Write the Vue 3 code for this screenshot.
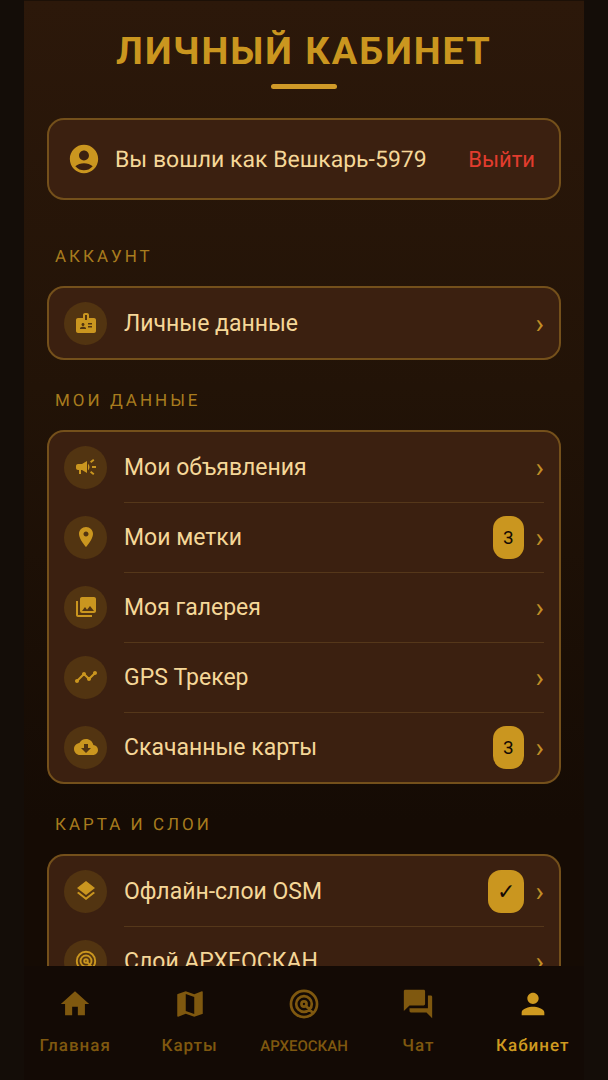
<template>
  <div class="app-shell">
    <main class="content">
      <header class="page-header">
        <h1>Личный кабинет</h1>
        <span class="title-line"></span>
      </header>

      <div class="card user-card">
        <svg class="user-icon" viewBox="0 0 24 24" aria-hidden="true">
          <path :d="icons.account" />
        </svg>
        <p class="user-text">Вы вошли как {{ userName }}</p>
        <button type="button" class="btn-logout">Выйти</button>
      </div>

      <section
        v-for="section in sections"
        :key="section.title"
        class="section"
      >
        <h2>{{ section.title }}</h2>
        <ul class="card menu-list">
          <li v-for="item in section.items" :key="item.label">
            <button type="button" class="menu-row">
              <span class="row-icon">
                <svg viewBox="0 0 24 24" aria-hidden="true">
                  <path
                    :d="icons[item.icon]"
                    :class="{ stroked: item.icon === 'scan' }"
                  />
                </svg>
              </span>
              <span class="row-label">{{ item.label }}</span>
              <span
                v-if="item.badge"
                class="badge"
                :class="{ 'badge--check': item.badge === '✓' }"
              >
                {{ item.badge }}
              </span>
              <span class="chevron">›</span>
            </button>
          </li>
        </ul>
      </section>
    </main>

    <nav class="bottom-nav">
      <a
        v-for="tab in tabs"
        :key="tab.label"
        href="#"
        class="tab"
        :class="{ 'tab--active': tab.label === activeTab }"
        @click.prevent="activeTab = tab.label"
      >
        <svg viewBox="0 0 24 24" aria-hidden="true">
          <path
            :d="icons[tab.icon]"
            :class="{ stroked: tab.icon === 'scan' }"
          />
        </svg>
        <span class="tab-label" :class="{ 'tab-label--small': tab.small }">
          {{ tab.label }}
        </span>
      </a>
    </nav>
  </div>
</template>

<script setup>
import { ref } from "vue";

const userName = "Вешкарь-5979";
const activeTab = ref("Кабинет");

const sections = [
  {
    title: "Аккаунт",
    items: [{ label: "Личные данные", icon: "badge" }],
  },
  {
    title: "Мои данные",
    items: [
      { label: "Мои объявления", icon: "campaign" },
      { label: "Мои метки", icon: "place", badge: "3" },
      { label: "Моя галерея", icon: "gallery" },
      { label: "GPS Трекер", icon: "timeline" },
      { label: "Скачанные карты", icon: "download", badge: "3" },
    ],
  },
  {
    title: "Карта и слои",
    items: [
      { label: "Офлайн-слои OSM", icon: "layers", badge: "✓" },
      { label: "Слой АРХЕОСКАН", icon: "scan" },
    ],
  },
];

const tabs = [
  { label: "Главная", icon: "home" },
  { label: "Карты", icon: "map" },
  { label: "АРХЕОСКАН", icon: "scan", small: true },
  { label: "Чат", icon: "forum" },
  { label: "Кабинет", icon: "person" },
];

const icons = {
  account:
    "M12 2C6.48 2 2 6.48 2 12s4.48 10 10 10 10-4.48 10-10S17.52 2 12 2zm0 4c1.93 0 3.5 1.57 3.5 3.5S13.93 13 12 13s-3.5-1.57-3.5-3.5S10.07 6 12 6zm0 14c-2.03 0-4.43-.82-6.14-2.88C7.55 15.8 9.68 15 12 15s4.45.8 6.14 2.12C16.43 19.18 14.03 20 12 20z",
  badge:
    "M20 7h-5V4c0-1.1-.9-2-2-2h-2c-1.1 0-2 .9-2 2v3H4c-1.1 0-2 .9-2 2v11c0 1.1.9 2 2 2h16c1.1 0 2-.9 2-2V9c0-1.1-.9-2-2-2zM9 12c.83 0 1.5.67 1.5 1.5S9.83 15 9 15s-1.5-.67-1.5-1.5S8.17 12 9 12zm3 6H6v-.75c0-1 2-1.5 3-1.5s3 .5 3 1.5V18zm1-9h-2V4h2v5zm5 7.5h-4V15h4v1.5zm0-3h-4V12h4v1.5z",
  campaign:
    "M18 11v2h4v-2h-4zM16 17.61c.96.71 2.21 1.65 3.2 2.39.4-.53.8-1.07 1.2-1.6-.99-.74-2.24-1.68-3.2-2.4-.4.54-.8 1.08-1.2 1.61zM20.4 5.6c-.4-.53-.8-1.07-1.2-1.6-.99.74-2.24 1.68-3.2 2.4.4.53.8 1.07 1.2 1.6.96-.72 2.21-1.65 3.2-2.4zM4 9c-1.1 0-2 .9-2 2v2c0 1.1.9 2 2 2h1v4h2v-4h1l5 3V6L8 9H4zM15.5 12c0-1.33-.58-2.53-1.5-3.35v6.69c.92-.81 1.5-2.01 1.5-3.34z",
  place:
    "M12 2C8.13 2 5 5.13 5 9c0 5.25 7 13 7 13s7-7.75 7-13c0-3.87-3.13-7-7-7zm0 9.5c-1.38 0-2.5-1.12-2.5-2.5s1.12-2.5 2.5-2.5 2.5 1.12 2.5 2.5-1.12 2.5-2.5 2.5z",
  gallery:
    "M22 16V4c0-1.1-.9-2-2-2H8c-1.1 0-2 .9-2 2v12c0 1.1.9 2 2 2h12c1.1 0 2-.9 2-2zm-11-4l2.03 2.71L16 11l4 5H8l3-4zM2 6v14c0 1.1.9 2 2 2h14v-2H4V6H2z",
  timeline:
    "M23 8c0 1.1-.9 2-2 2-.18 0-.35-.02-.51-.07l-3.56 3.55c.05.16.07.34.07.52 0 1.1-.9 2-2 2s-2-.9-2-2c0-.18.02-.36.07-.52l-2.55-2.55c-.16.05-.34.07-.52.07s-.36-.02-.52-.07l-4.55 4.56c.05.16.07.33.07.51 0 1.1-.9 2-2 2s-2-.9-2-2 .9-2 2-2c.18 0 .35.02.51.07l4.56-4.55C8.02 9.36 8 9.18 8 9c0-1.1.9-2 2-2s2 .9 2 2c0 .18-.02.36-.07.52l2.55 2.55c.16-.05.34-.07.52-.07s.36.02.52.07l3.55-3.56C19.02 8.35 19 8.18 19 8c0-1.1.9-2 2-2s2 .9 2 2z",
  download:
    "M19.35 10.04C18.67 6.59 15.64 4 12 4 9.11 4 6.6 5.64 5.35 8.04 2.34 8.36 0 10.91 0 14c0 3.31 2.69 6 6 6h13c2.76 0 5-2.24 5-5 0-2.64-2.05-4.78-4.65-4.96zM17 13l-5 5-5-5h3V9h4v4h3z",
  layers:
    "M11.99 18.54l-7.37-5.73L3 14.07l9 7 9-7-1.63-1.27-7.38 5.74zM12 16l7.36-5.73L21 9l-9-7-9 7 1.63 1.27L12 16z",
  // кольца радара и луч
  scan: "M21.2 12A9.2 9.2 0 1 1 2.8 12A9.2 9.2 0 1 1 21.2 12zM17.5 12A5.5 5.5 0 1 1 6.5 12A5.5 5.5 0 1 1 17.5 12zM13.8 12A1.8 1.8 0 1 1 10.2 12A1.8 1.8 0 1 1 13.8 12zM12.5 12.5L18.5 18.5",
  home: "M10 20v-6h4v6h5v-8h3L12 3 2 12h3v8z",
  map: "M20.5 3l-.16.03L15 5.1 9 3 3.36 4.9c-.21.07-.36.25-.36.48V20.5c0 .28.22.5.5.5l.16-.03L9 18.9l6 2.1 5.64-1.9c.21-.07.36-.25.36-.48V3.5c0-.28-.22-.5-.5-.5zM15 19l-6-2.11V5l6 2.11V19z",
  forum:
    "M21 6h-2v9H6v2c0 .55.45 1 1 1h11l4 4V7c0-.55-.45-1-1-1zm-4 6V3c0-.55-.45-1-1-1H3c-.55 0-1 .45-1 1v14l4-4h10c.55 0 1-.45 1-1z",
  person:
    "M12 12c2.21 0 4-1.79 4-4s-1.79-4-4-4-4 1.79-4 4 1.79 4 4 4zm0 2c-2.67 0-8 1.34-8 4v2h16v-2c0-2.66-5.33-4-8-4z",
};
</script>

<style>
body {
  background: #140d08;
}
</style>

<style scoped>
.app-shell {
  display: flex;
  flex-direction: column;
  height: 100vh;
  margin: 0 24px;
  background: #130a05;
  font-family: Roboto, "Noto Sans", sans-serif;
  text-rendering: geometricPrecision;
  color: #f5d798;
}

svg {
  display: block;
  fill: currentColor;
}
.stroked {
  fill: none;
  stroke: currentColor;
  stroke-width: 1.9;
}

button {
  border: none;
  background: none;
  font-family: inherit;
  color: inherit;
  cursor: pointer;
}

.content {
  flex: 1;
  min-height: 0;
  overflow-y: auto;
  scrollbar-width: none;
  padding: 0 23px;
  border-top: 1px solid #1c1007;
  background: linear-gradient(#2c180a, #221307 40%, #150b04 85%);
}

/* HEADER */
.page-header {
  display: flex;
  flex-direction: column;
  align-items: center;
  gap: 10px;
  padding: 29px 0;
}
.page-header h1 {
  margin: 0;
  font-size: 38px;
  line-height: 44px;
  font-weight: 700;
  letter-spacing: 2px;
  text-transform: uppercase;
  color: #ca961f;
}
.title-line {
  width: 66px;
  height: 5px;
  border-radius: 3px;
  background: #d09a28;
}

.card {
  border: 2px solid #74501b;
  border-radius: 17px;
  background: #3b2010;
}

/* USER */
.user-card {
  display: flex;
  align-items: center;
  padding: 22px 24px 22px 18px;
}
.user-icon {
  width: 34px;
  height: 34px;
  margin-right: 14px;
  color: #ca961f;
}
.user-text {
  flex: 1;
  margin: 0;
  font-size: 23px;
  line-height: 33px;
}
.btn-logout {
  padding: 0;
  font-size: 22px;
  line-height: 33px;
  color: #e23c2e;
}

/* SECTIONS */
.section h2 {
  margin: 0;
  padding: 30px 8px 18px;
  font-size: 17px;
  line-height: 22px;
  font-weight: 400;
  letter-spacing: 3px;
  text-transform: uppercase;
  color: #a87c1e;
}
.user-card + .section {
  margin-top: 16px;
}

.menu-list {
  margin: 0;
  padding: 0 15px;
  list-style: none;
}
.menu-row {
  display: flex;
  align-items: center;
  width: 100%;
  height: 70px;
  padding: 0;
  text-align: left;
}
.menu-list li + li {
  background: linear-gradient(#55371a, #55371a) 60px 0 / 100% 1px no-repeat;
}
.row-icon {
  display: grid;
  place-items: center;
  width: 43px;
  height: 43px;
  margin-right: 17px;
  border-radius: 50%;
  background: #523411;
  color: #ca961f;
}
.row-icon svg {
  width: 24px;
  height: 24px;
}
.row-label {
  flex: 1;
  font-size: 23px;
  line-height: 33px;
}
.badge {
  margin-right: 12px;
  padding: 0 10px;
  border-radius: 13px;
  background: #ca961f;
  font-size: 19px;
  line-height: 43px;
  color: #140a04;
}
.badge--check {
  padding: 0 9px;
  font-size: 22px;
}
.chevron {
  font-size: 28px;
  line-height: 33px;
  color: #c08e26;
}

/* NAVIGATION */
.bottom-nav {
  display: grid;
  grid-template-columns: repeat(5, 1fr);
  margin: 0 -6px;
  padding: 21px 0 23px;
}
.tab {
  display: flex;
  flex-direction: column;
  align-items: center;
  gap: 14px;
  text-decoration: none;
  color: #7f580f;
}
.tab--active {
  color: #cf9a20;
}
.tab svg {
  width: 34px;
  height: 34px;
}
.tab-label {
  font-size: 17px;
  line-height: 22px;
  font-weight: 500;
  letter-spacing: 1px;
}
.tab-label--small {
  font-size: 15px;
  letter-spacing: 0;
}
</style>
